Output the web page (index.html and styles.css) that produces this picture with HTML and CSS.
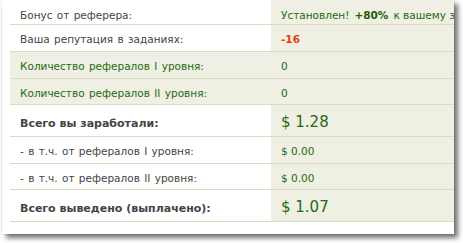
FILE: index.html
```html
<!DOCTYPE html>
<html>
<head>
<meta charset="utf-8">
<link rel="stylesheet" href="styles.css">
</head>
<body>
<div class="panel">
  <div class="table">
    <div class="row first">
      <div class="label">Бонус от реферера:</div>
      <div class="value">Установлен! <b>+80%</b> к вашему заработку</div>
    </div>
    <div class="row">
      <div class="label">Ваша репутация в заданиях:</div>
      <div class="value"><b class="neg">-16</b></div>
    </div>
    <div class="row alt">
      <div class="label">Количество рефералов I уровня:</div>
      <div class="value">0</div>
    </div>
    <div class="row alt short">
      <div class="label">Количество рефералов II уровня:</div>
      <div class="value">0</div>
    </div>
    <div class="row big">
      <div class="label">Всего вы заработали:</div>
      <div class="value">$ 1.28</div>
    </div>
    <div class="row">
      <div class="label">- в т.ч. от рефералов I уровня:</div>
      <div class="value">$ 0.00</div>
    </div>
    <div class="row short">
      <div class="label">- в т.ч. от рефералов II уровня:</div>
      <div class="value">$ 0.00</div>
    </div>
    <div class="row big">
      <div class="label">Всего выведено (выплачено):</div>
      <div class="value">$ 1.07</div>
    </div>
  </div>
</div>
</body>
</html>
```

FILE: styles.css
```css
html, body {
  margin: 0;
  padding: 0;
  background: #ffffff;
  overflow: hidden;
}
body {
  width: 463px;
  height: 243px;
  font-family: "DejaVu Sans", Verdana, sans-serif;
  font-size: 10.5px;
  color: #444444;
}
.panel {
  margin-left: 2px;
  width: 444px;
  height: 222px;
  padding: 0 0 12px 8px;
  background: #ffffff;
  overflow: hidden;
  box-shadow: 0 0 2px rgba(0, 0, 0, 0.18), 4px 4px 5px rgba(0, 0, 0, 0.55);
}
.table {
  display: flex;
  flex-direction: column;
}
.row {
  display: grid;
  grid-template-columns: 261px 183px;
  height: 26px;
  border-bottom: 1px solid #d9ddbf;
}
.row.first { height: 24px; }
.row.short { height: 25px; }
.row.big { height: 31px; }
.label, .value {
  display: flex;
  align-items: center;
  padding-top: 2px;
  white-space: nowrap;
  overflow: hidden;
}
.label {
  padding-left: 10px;
  word-spacing: 1px;
}
.row.first .label, .row.first .value { padding-top: 5px; }
.value {
  background: #f0efe4;
  padding-left: 10px;
  color: #246b12;
}
.value b {
  color: #1d5e0c;
  margin: 0 5px 0 5px;
}
.value b.neg {
  color: #e0420e;
  margin: 0;
}
.row.alt .label {
  background: #f0efe4;
  color: #246b12;
}
.row.big .label {
  font-weight: bold;
  font-size: 11px;
  word-spacing: 0;
  padding-top: 5px;
}
.row.big .value {
  font-size: 15px;
  padding-top: 3px;
}
```
